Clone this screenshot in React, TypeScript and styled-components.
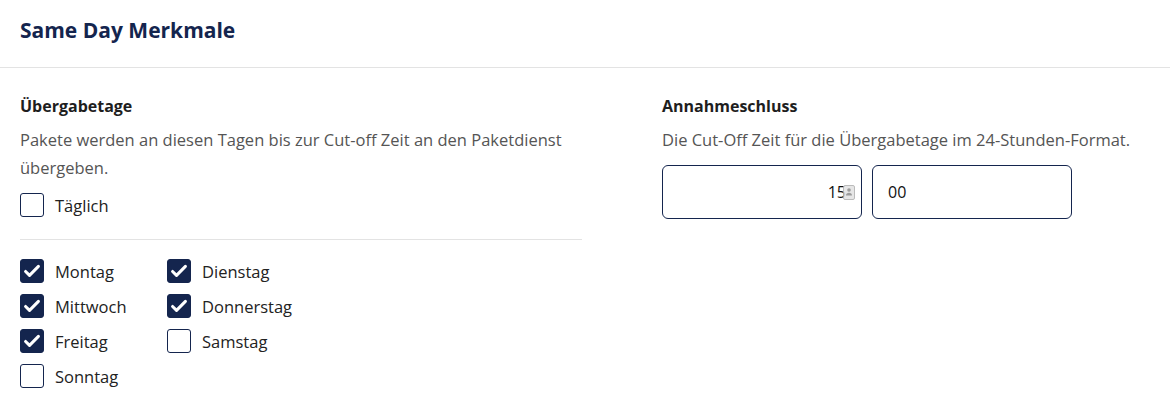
import React, { useState } from 'react';
import styled, { createGlobalStyle } from 'styled-components';

const NAVY = '#14254e';

const days = [
  { name: 'Montag', checked: true },
  { name: 'Dienstag', checked: true },
  { name: 'Mittwoch', checked: true },
  { name: 'Donnerstag', checked: true },
  { name: 'Freitag', checked: true },
  { name: 'Samstag', checked: false },
  { name: 'Sonntag', checked: false },
];

function Check({ label, initial }: { label: string; initial: boolean }) {
  const [on, setOn] = useState(initial);
  return (
    <CheckRow>
      <HiddenInput type="checkbox" checked={on} onChange={() => setOn(!on)} />
      <Box $checked={on}>
        {on && (
          <svg width="24" height="24" viewBox="0 0 24 24" fill="none">
            <path d="M5 12.5l4.3 4.3L19 7" stroke="#fff" strokeWidth="3.3" strokeLinecap="round" strokeLinejoin="round" />
          </svg>
        )}
      </Box>
      <CheckLabel>{label}</CheckLabel>
    </CheckRow>
  );
}

function App() {
  return (
    <>
      <GlobalStyle />
      <Page>
        <Header>
          <Title>Same Day Merkmale</Title>
        </Header>
        <Body>
          <LeftCol>
            <Heading>Übergabetage</Heading>
            <Description>
              Pakete werden an diesen Tagen bis zur Cut-off Zeit an den Paketdienst übergeben.
            </Description>
            <Check label="Täglich" initial={false} />
            <Divider />
            <DayGrid>
              {days.map((d) => (
                <Check key={d.name} label={d.name} initial={d.checked} />
              ))}
            </DayGrid>
          </LeftCol>
          <RightCol>
            <Heading>Annahmeschluss</Heading>
            <Description>Die Cut-Off Zeit für die Übergabetage im 24-Stunden-Format.</Description>
            <TimeRow>
              <FieldWrap>
                <TimeInput $align="right" defaultValue="15" />
                <AutofillIcon width="12" height="15" viewBox="0 0 12 15">
                  <rect x="0.5" y="0.5" width="11" height="14" rx="1.5" fill="#e2e2e2" stroke="#b0b0b0" />
                  <circle cx="6" cy="5" r="1.8" fill="#8a8a8a" />
                  <path d="M3 10.5c0-1.8 1.4-2.8 3-2.8s3 1 3 2.8z" fill="#8a8a8a" />
                </AutofillIcon>
              </FieldWrap>
              <FieldWrap>
                <TimeInput $align="left" defaultValue="00" />
              </FieldWrap>
            </TimeRow>
          </RightCol>
        </Body>
      </Page>
    </>
  );
}

export default App;

const GlobalStyle = createGlobalStyle`
  body {
    margin: 0;
    background: #fff;
    font-family: "Open Sans", "Noto Sans", sans-serif;
  }
`;

const Page = styled.div`
  width: 100%;
  min-height: 412px;
  background: #fff;
`;

const Header = styled.header`
  padding: 15px 20px 22px;
  border-bottom: 1px solid #e3e3e3;
`;

const Title = styled.h1`
  margin: 0;
  font-size: 21px;
  line-height: 30px;
  font-weight: 700;
  color: ${NAVY};
`;

const Body = styled.div`
  display: flex;
  gap: 80px;
  padding: 26px 20px 20px;
`;

const LeftCol = styled.section`
  width: 562px;
  display: flex;
  flex-direction: column;
`;

const RightCol = styled.section`
  flex: 1;
  display: flex;
  flex-direction: column;
`;

const Heading = styled.h2`
  margin: 0;
  font-size: 16px;
  line-height: 24px;
  font-weight: 700;
  color: #1e1e1e;
`;

const Description = styled.p`
  margin: 8px 0 11px;
  font-size: 16.5px;
  line-height: 28px;
  color: #555;
`;

const Divider = styled.hr`
  margin: 22px 0 19px;
  border: none;
  border-top: 1px solid #e3e3e3;
`;

const DayGrid = styled.div`
  display: grid;
  grid-template-columns: 147px 1fr;
  row-gap: 11px;
`;

const CheckRow = styled.label`
  display: flex;
  align-items: center;
  gap: 11px;
  height: 24px;
  cursor: pointer;
`;

const HiddenInput = styled.input`
  display: none;
`;

const Box = styled.span<{ $checked: boolean }>`
  width: 24px;
  height: 24px;
  box-sizing: border-box;
  border-radius: 3px;
  border: 1px solid ${NAVY};
  background: ${(p) => (p.$checked ? NAVY : '#fff')};
  display: flex;
  align-items: center;
  justify-content: center;
  flex-shrink: 0;
`;

const CheckLabel = styled.span`
  font-size: 16.5px;
  color: #222;
`;

const TimeRow = styled.div`
  display: flex;
  gap: 10px;
`;

const FieldWrap = styled.div`
  position: relative;
  width: 200px;
`;

const TimeInput = styled.input<{ $align: 'left' | 'right' }>`
  width: 100%;
  height: 54px;
  box-sizing: border-box;
  border: 1px solid ${NAVY};
  border-radius: 6px;
  padding: 0 15px;
  font-family: inherit;
  font-size: 16px;
  color: #111;
  text-align: ${(p) => p.$align};
  outline: none;
`;

const AutofillIcon = styled.svg`
  position: absolute;
  right: 7px;
  top: 20px;
  opacity: 0.85;
`;
